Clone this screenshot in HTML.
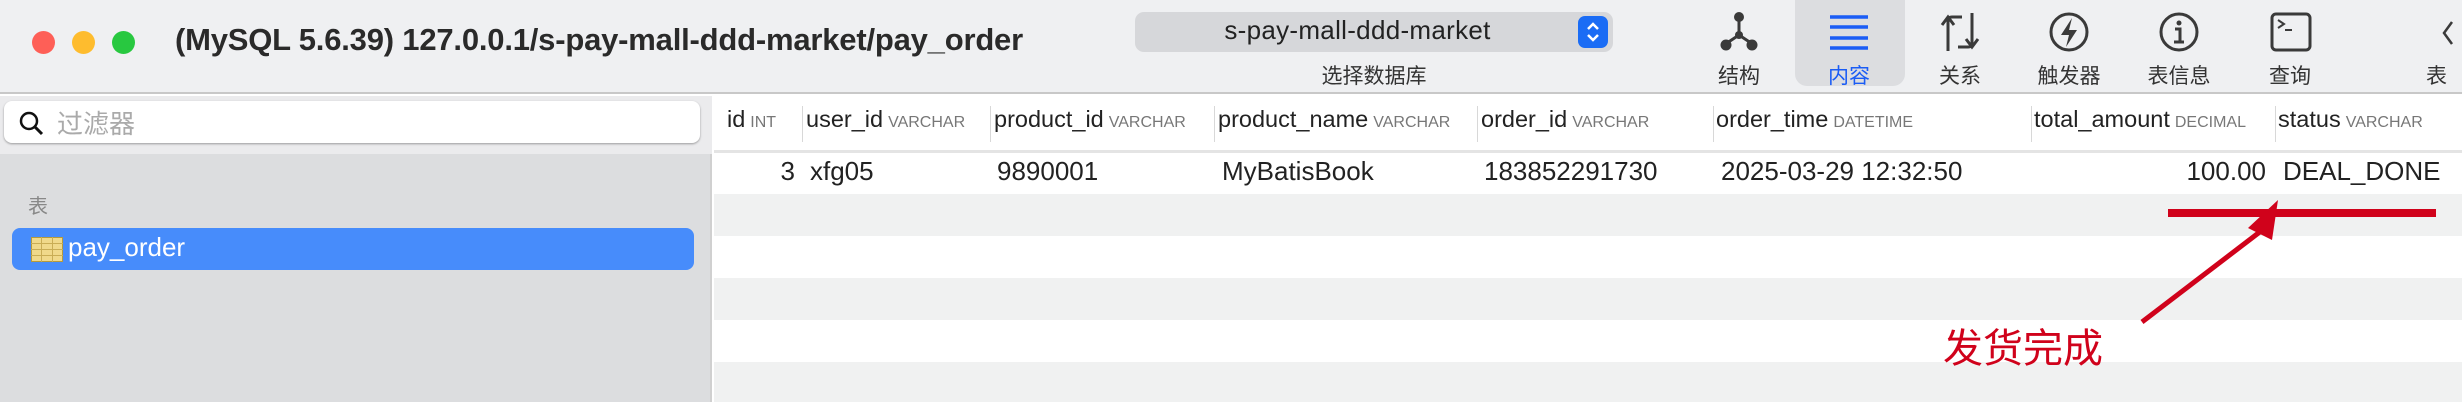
<!DOCTYPE html>
<html><head><meta charset="utf-8"><style>
*{margin:0;padding:0;box-sizing:border-box}
body{width:2462px;height:402px;overflow:hidden;background:#fff;font-family:"Liberation Sans","Noto Sans CJK SC",sans-serif;position:relative;color:#222}
.a{position:absolute;white-space:nowrap}
.dot{position:absolute;width:23px;height:23px;border-radius:50%;top:31px}
.lbl{position:absolute;top:60px;font-size:21px;color:#333;transform:translateX(-50%)}
.ic{position:absolute;top:11px}
.h{position:absolute;top:106px;font-size:23.5px;color:#222}
.h small{font-size:16px;color:#777;margin-left:5px}
.sep{position:absolute;top:106px;width:1px;height:36px;background:#d8d8d8}
.d{position:absolute;top:156px;font-size:26px;color:#222}
</style></head><body>
<div class="a" style="left:0;top:0;width:2462px;height:94px;background:#eff0f2;border-bottom:2px solid #c8c8c8"></div>
<div class="dot" style="left:32px;background:#fe5f57"></div>
<div class="dot" style="left:72px;background:#febc2e"></div>
<div class="dot" style="left:112px;background:#28c840"></div>
<div class="a" style="left:175px;top:22px;font-size:31px;font-weight:bold;color:#2a2a2a;letter-spacing:-0.2px">(MySQL 5.6.39) 127.0.0.1/s-pay-mall-ddd-market/pay_order</div>
<div class="a" style="left:1135px;top:12px;width:478px;height:40px;border-radius:9px;background:#d6d7da"></div>
<div class="a" style="left:1135px;top:15px;width:445px;text-align:center;font-size:26px;color:#222;letter-spacing:0.3px">s-pay-mall-ddd-market</div>
<div class="a" style="left:1578px;top:16px;width:30px;height:32px;border-radius:7px;background:#1a6cf5"><svg width="30" height="32"><path d="M10 13l5-5 5 5M10 19l5 5 5-5" stroke="#fff" stroke-width="2.5" fill="none"/></svg></div>
<div class="a" style="left:1374px;top:60px;transform:translateX(-50%);font-size:21px;color:#333">选择数据库</div>
<div class="a" style="left:1795px;top:0;width:110px;height:86px;border-radius:0 0 12px 12px;background:#dcdde0"></div>
<svg class="ic" style="left:1719px" width="40" height="42"><path d="M20 6v18M20 24L8 32M20 24l12 8" stroke="#3a3a3a" stroke-width="3"/><circle cx="20" cy="6" r="5" fill="#3a3a3a"/><circle cx="20" cy="24" r="4" fill="#3a3a3a"/><circle cx="7" cy="34" r="5.5" fill="#3a3a3a"/><circle cx="33" cy="34" r="5.5" fill="#3a3a3a"/></svg>
<svg class="ic" style="left:1829px" width="40" height="42"><path d="M1 6h38M1 16h38M1 27h38M1 37h38" stroke="#1a5cf5" stroke-width="3.5"/></svg>
<svg class="ic" style="left:1940px" width="40" height="42"><path d="M8 40V10q0-4 4-4h10M2 14l6-8 6 8M32 2v30q0 4-4 4H18M26 28l6 8 6-8" stroke="#3a3a3a" stroke-width="3" fill="none"/></svg>
<svg class="ic" style="left:2049px" width="40" height="42"><circle cx="20" cy="21" r="18" stroke="#3a3a3a" stroke-width="3" fill="none"/><path d="M23 7L12 24h8l-3 12 11-17h-8z" fill="#3a3a3a"/></svg>
<svg class="ic" style="left:2159px" width="40" height="42"><circle cx="20" cy="21" r="18" stroke="#3a3a3a" stroke-width="3" fill="none"/><circle cx="20" cy="12" r="2.5" fill="#3a3a3a"/><path d="M16 18h5v13M15 31h10" stroke="#3a3a3a" stroke-width="3" fill="none"/></svg>
<svg class="ic" style="left:2270px" width="42" height="42"><rect x="2" y="3" width="38" height="36" rx="4" stroke="#3a3a3a" stroke-width="3" fill="none"/><path d="M8 9l6 4-6 4M15 19h7" stroke="#3a3a3a" stroke-width="2" fill="none"/></svg>
<svg class="ic" style="left:2438px;top:18px" width="20" height="30"><path d="M14 4L6 15l8 11" stroke="#3a3a3a" stroke-width="2.5" fill="none"/></svg>
<div class="lbl" style="left:1739px">结构</div>
<div class="lbl" style="left:1849px;color:#1a5cf5">内容</div>
<div class="lbl" style="left:1960px">关系</div>
<div class="lbl" style="left:2069px">触发器</div>
<div class="lbl" style="left:2179px">表信息</div>
<div class="lbl" style="left:2290px">查询</div>
<div class="lbl" style="left:2426px;transform:none">表历</div>
<div class="a" style="left:0;top:96px;width:712px;height:306px;background:#dcdddf;border-right:2px solid #d0d0d0"></div>
<div class="a" style="left:0;top:96px;width:712px;height:58px;background:#ebebed"></div>
<div class="a" style="left:4px;top:101px;width:696px;height:42px;background:#fff;border-radius:8px;box-shadow:0 1px 2px rgba(0,0,0,.35)"></div>
<svg class="a" style="left:18px;top:110px" width="28" height="28"><circle cx="11" cy="11" r="8" stroke="#111" stroke-width="2.5" fill="none"/><path d="M17 17l7 7" stroke="#111" stroke-width="3"/></svg>
<div class="a" style="left:57px;top:104px;font-size:26px;color:#aaa">过滤器</div>
<div class="a" style="left:28px;top:190px;font-size:20px;color:#888">表</div>
<div class="a" style="left:12px;top:228px;width:682px;height:42px;background:#478cfb;border-radius:8px"></div>
<svg class="a" style="left:31px;top:237px" width="32" height="25"><rect x="0.5" y="0.5" width="31" height="24" fill="#f0d98a" stroke="#b59a3c"/><path d="M0 6.5h32M0 12.5h32M0 18.5h32M10.5 0v25M21.5 0v25" stroke="#c9ad55"/></svg>
<div class="a" style="left:68px;top:232px;font-size:26px;color:#fff">pay_order</div>
<div class="a" style="left:714px;top:96px;width:1748px;height:54px;background:#fff"></div>
<div class="a" style="left:714px;top:150px;width:1748px;height:3px;background:#e4e4e4"></div>
<div class="a" style="left:714px;top:194px;width:1748px;height:42px;background:#f0f1f1"></div>
<div class="a" style="left:714px;top:278px;width:1748px;height:42px;background:#f0f1f1"></div>
<div class="a" style="left:714px;top:362px;width:1748px;height:40px;background:#f0f1f1"></div>
<div class="h" style="left:727px">id<small>INT</small></div>
<div class="sep" style="left:802px"></div><div class="h" style="left:806px">user_id<small>VARCHAR</small></div>
<div class="sep" style="left:990px"></div><div class="h" style="left:994px">product_id<small>VARCHAR</small></div>
<div class="sep" style="left:1214px"></div><div class="h" style="left:1218px">product_name<small>VARCHAR</small></div>
<div class="sep" style="left:1477px"></div><div class="h" style="left:1481px">order_id<small>VARCHAR</small></div>
<div class="sep" style="left:1713px"></div><div class="h" style="left:1716px">order_time<small>DATETIME</small></div>
<div class="sep" style="left:2031px"></div><div class="h" style="left:2034px">total_amount<small>DECIMAL</small></div>
<div class="sep" style="left:2275px"></div><div class="h" style="left:2278px">status<small>VARCHAR</small></div>
<div class="d" style="right:1667px">3</div>
<div class="d" style="left:810px">xfg05</div>
<div class="d" style="left:997px">9890001</div>
<div class="d" style="left:1222px">MyBatisBook</div>
<div class="d" style="left:1484px">183852291730</div>
<div class="d" style="left:1721px">2025-03-29 12:32:50</div>
<div class="d" style="right:196px">100.00</div>
<div class="d" style="left:2283px">DEAL_DONE</div>
<svg class="a" style="left:0;top:0" width="2462" height="402"><rect x="2168" y="209" width="268" height="8" fill="#d0021b"/><path d="M2142 322L2265 228" stroke="#d0021b" stroke-width="5"/><path d="M2278 200L2248 228L2272 240Z" fill="#d0021b"/></svg>
<div class="a" style="left:1943px;top:316px;font-size:40px;color:#d0021b">发货完成</div>
</body></html>
